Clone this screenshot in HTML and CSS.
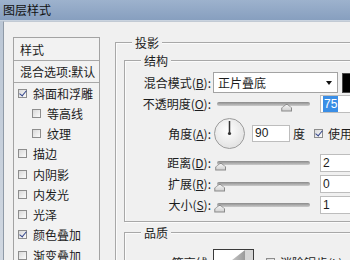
FILE: index.html
```html
<!DOCTYPE html>
<html lang="zh-CN">
<head>
  <meta charset="UTF-8">
  <meta name="viewport" content="width=device-width, initial-scale=1">
  <title>图层样式</title>
  <link rel="stylesheet" href="styles.css">
</head>
<body>

  <div class="window">
    <div class="titlebar">图层样式</div>

    <div class="client">
      <ul class="styles-list">
        <li class="list-head first">样式</li>
        <li class="list-head">混合选项:默认</li>
        <li><span class="check on"></span>斜面和浮雕</li>
        <li class="sub"><span class="check"></span>等高线</li>
        <li class="sub"><span class="check"></span>纹理</li>
        <li><span class="check"></span>描边</li>
        <li><span class="check"></span>内阴影</li>
        <li><span class="check"></span>内发光</li>
        <li><span class="check"></span>光泽</li>
        <li><span class="check on"></span>颜色叠加</li>
        <li><span class="check"></span>渐变叠加</li>
        <li><span class="check"></span>图案叠加</li>
      </ul>

      <div class="settings">
        <div class="group outer">
          <div class="group-title">投影</div>

          <div class="group inner">
            <div class="group-title">结构</div>
            <div class="rows">
              <div class="row">
                <label>混合模式(<u>B</u>):</label>
                <div class="ctrl">
                  <div class="select">正片叠底<span class="arrow"></span></div>
                  <div class="swatch"></div>
                </div>
              </div>

              <div class="row">
                <label>不透明度(<u>O</u>):</label>
                <div class="ctrl">
                  <div class="slider"><div class="track"><span class="thumb" style="left: 75%"></span></div></div>
                  <div class="field"><span class="selected">75</span></div>
                </div>
              </div>

              <div class="row tall">
                <label>角度(<u>A</u>):</label>
                <div class="ctrl">
                  <svg class="dial" width="31" height="31" viewBox="0 0 31 31">
                    <defs>
                      <radialGradient id="dialFill" cx="0.45" cy="0.4" r="0.6">
                        <stop offset="0" stop-color="#ffffff"/>
                        <stop offset="1" stop-color="#e2e2e2"/>
                      </radialGradient>
                    </defs>
                    <circle cx="15.5" cy="15.5" r="15" fill="url(#dialFill)" stroke="#9c9c9c"/>
                    <line x1="15.5" y1="3" x2="15.5" y2="15.5" stroke="#333" stroke-width="1.5"/>
                    <circle cx="15.5" cy="15.5" r="1.6" fill="#333"/>
                  </svg>
                  <div class="field short">90</div>
                  <span class="unit">度</span>
                  <span class="check on"></span>
                  <span class="check-text">使用全局光(<u>G</u>)</span>
                </div>
              </div>

              <div class="row">
                <label>距离(<u>D</u>):</label>
                <div class="ctrl">
                  <div class="slider"><div class="track"><span class="thumb" style="left: 4%"></span></div></div>
                  <div class="field">2</div>
                </div>
              </div>

              <div class="row">
                <label>扩展(<u>R</u>):</label>
                <div class="ctrl">
                  <div class="slider"><div class="track"><span class="thumb" style="left: 3%"></span></div></div>
                  <div class="field">0</div>
                </div>
              </div>

              <div class="row">
                <label>大小(<u>S</u>):</label>
                <div class="ctrl">
                  <div class="slider"><div class="track"><span class="thumb" style="left: 3%"></span></div></div>
                  <div class="field">1</div>
                </div>
              </div>
            </div>
          </div>

          <div class="group inner quality">
            <div class="group-title">品质</div>
            <div class="rows quality-rows">
              <div class="row auto">
                <label>等高线:</label>
                <div class="ctrl">
                  <div class="contour">
                    <svg width="39" height="24" viewBox="0 0 39 24">
                      <defs>
                        <linearGradient id="curveFill" x1="0" x2="1" y1="0" y2="0">
                          <stop offset="0" stop-color="#ffffff"/>
                          <stop offset="1" stop-color="#9a9a9a"/>
                        </linearGradient>
                      </defs>
                      <polygon points="0,24 31,0 31,24" fill="url(#curveFill)"/>
                      <rect x="31" y="0" width="8" height="24" fill="#d6d6d6"/>
                    </svg>
                  </div>
                  <span class="check gap"></span>
                  <span class="check-text">消除锯齿(<u>L</u>)</span>
                </div>
              </div>
            </div>
          </div>
        </div>
      </div>
    </div>
  </div>

</body>
</html>
```

FILE: styles.css
```css
* {
  box-sizing: border-box;
}

html, body {
  margin: 0;
  overflow: hidden;
}

body {
  font-family: "Noto Sans CJK SC", "Liberation Sans", sans-serif;
  font-size: 12px;
  color: #1c1c1c;
  background: #f0f0f0;
}

.window {
  width: 640px;
  height: 320px;
  background: linear-gradient(#b9c5d4, #d6dce4);
}

.titlebar {
  height: 21px;
  padding-left: 3px;
  line-height: 20px;
  color: #111;
  background: linear-gradient(#9db2cd, #879fbf);
  border-bottom: 1px solid #c9d3df;
}

.client {
  display: flex;
  align-items: flex-start;
  gap: 15px;
  margin-left: 3px;
  height: 299px;
  padding: 15px 0 0 9px;
  background: #f0f0f0;
  border-left: 1px solid #8f9aa7;
  border-top: 1px solid #c2cad4;
}

/* left column: list of effects */

.styles-list {
  list-style: none;
  margin: 0;
  padding: 0;
  width: 87px;
  height: 260px;
  flex-shrink: 0;
  background: #f2f2f2;
  border: 1px solid #a3a3a3;
}

.styles-list li {
  display: flex;
  align-items: center;
  gap: 6px;
  height: 20.25px;
  padding-left: 4px;
  white-space: nowrap;
}

.styles-list li.sub {
  padding-left: 18px;
}

.styles-list .list-head {
  height: 22px;
  padding-left: 6px;
  border-bottom: 1px solid #a8a8a8;
}

.styles-list .list-head.first {
  height: 23px;
}

.check {
  position: relative;
  display: inline-block;
  flex-shrink: 0;
  width: 9px;
  height: 9px;
  border: 1px solid #8d8d8d;
  background: linear-gradient(135deg, #d9d9d9, #fbfbfb);
}

.check.on::after {
  content: "";
  position: absolute;
  left: 2px;
  top: -1px;
  width: 3px;
  height: 6px;
  border: solid #34468c;
  border-width: 0 1.5px 1.5px 0;
  transform: rotate(40deg);
}

/* right column: group boxes */

.settings {
  margin-top: 5px;
}

.group {
  border: 1px solid #a8a8a8;
  box-shadow: inset 1px 1px 0 #fbfbfb, 1px 1px 0 #fbfbfb;
}

.group-title {
  display: table;
  height: 16px;
  margin: -8px 0 0 16px;
  padding: 0 3px;
  line-height: 16px;
  background: #f0f0f0;
}

.outer {
  width: 440px;
  height: 260px;
}

.inner {
  margin: 9px 8px 0 8px;
}

.inner.quality {
  margin-top: 10px;
  height: 80px;
}

.rows {
  padding: 3px 0 6px;
}

.quality-rows {
  padding-top: 8px;
}

.row {
  display: grid;
  grid-template-columns: 86px 1fr;
  column-gap: 2px;
  align-items: center;
  height: 21px;
}

.row.tall {
  height: 38px;
}

.row.auto {
  height: auto;
}

.row label {
  text-align: right;
  white-space: nowrap;
}

.ctrl {
  display: flex;
  align-items: center;
  white-space: nowrap;
}

.select {
  display: flex;
  align-items: center;
  width: 125px;
  height: 21px;
  padding-left: 4px;
  background: #fff;
  border: 1px solid #a3a3a3;
}

.arrow {
  margin: 0 5px 0 auto;
  border-left: 3px solid transparent;
  border-right: 3px solid transparent;
  border-top: 4px solid #111;
}

.swatch {
  width: 24px;
  height: 20px;
  margin-left: 4px;
  background: #000;
  border: 1px solid #4a4a4a;
}

.slider {
  width: 101px;
  padding: 0 4px;
}

.track {
  position: relative;
  height: 4px;
  border-radius: 2px;
  background: linear-gradient(#8a8a8a, #cbcbcb);
}

.thumb {
  position: absolute;
  top: 2px;
  width: 11px;
  height: 8px;
  margin-left: -5.5px;
  background: #8a8a8a;
  clip-path: polygon(50% 0, 100% 55%, 100% 100%, 0 100%, 0 55%);
}

.thumb::after {
  content: "";
  position: absolute;
  inset: 1px;
  background: linear-gradient(#f4f4f4, #cfcfcf);
  clip-path: polygon(50% 0, 100% 55%, 100% 100%, 0 100%, 0 55%);
}

.field {
  width: 40px;
  height: 18px;
  margin-left: 6px;
  padding-left: 2px;
  font-family: "Liberation Sans", sans-serif;
  line-height: 16px;
  background: #fff;
  border: 1px solid #bdbdbd;
}

.field.short {
  width: 38px;
  height: 17px;
  margin-left: 7px;
  line-height: 15px;
}

.selected {
  display: inline-block;
  padding: 0 1px;
  color: #fff;
  background: #3a8ee6;
}

.dial {
  margin-left: 1px;
}

.unit {
  margin-left: 3px;
}

.unit + .check {
  margin-left: 9px;
}

.check-text {
  margin-left: 5px;
}

.contour {
  width: 41px;
  height: 26px;
  background: #fff;
  border: 1px solid #3a3a3a;
}

.contour svg {
  display: block;
}

.check.gap {
  margin-left: 12px;
}
```
